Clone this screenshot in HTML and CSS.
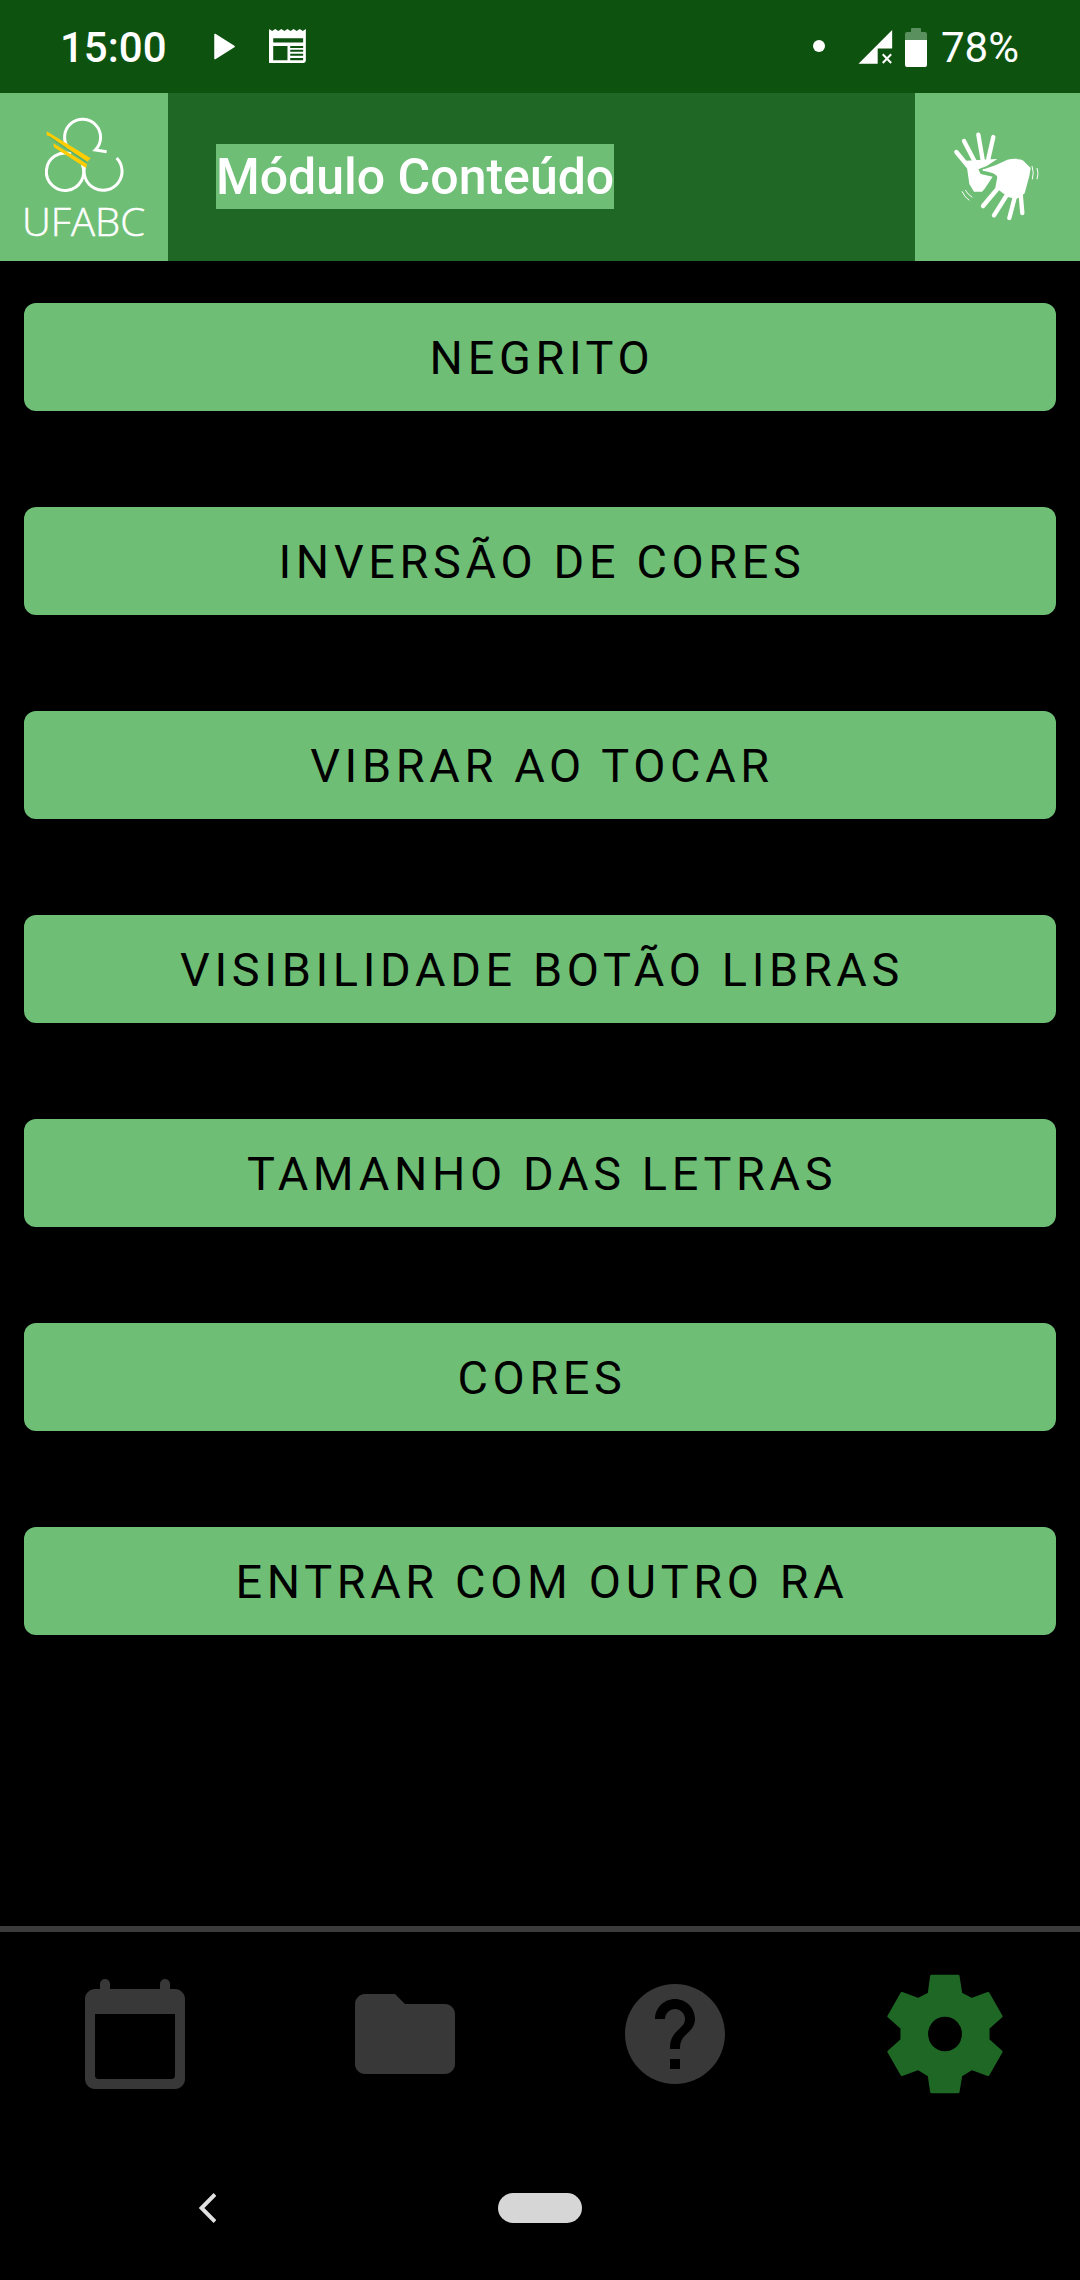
FILE: index.html
```html
<!DOCTYPE html>
<html lang="pt-BR">
<head>
    <meta charset="UTF-8">
    <title>Módulo Conteúdo</title>
    <link rel="stylesheet" href="styles.css">
</head>
<body>

    <div class="status-bar">
        <span class="status-time">15:00</span>
        <svg class="icon-play" viewBox="0 0 21 27"><path d="M1 1.5 20 13.5 1 25.5z" fill="#fff" stroke="#fff" stroke-width="1.5" stroke-linejoin="round"/></svg>
        <svg class="icon-news" viewBox="778 90 111 100">
            <path d="M778 90l9 6 9-6 9 6 9-6 9 6 9-6 9 6 9-6 9 6 9-6 9 6 9-6v93q0 7-7 7h-97q-7 0-7-7z" fill="#fff"/>
            <path d="M790 117h88v13h-88zM790 140h42v42h-42zM840 140h38v6h-38zM840 151h38v6h-38zM840 163h38v6h-38zM840 175h38v7h-38z" fill="#0e5210"/>
        </svg>
        <div class="status-right">
            <span class="status-dot"></span>
            <svg class="icon-signal" viewBox="925 90 101 101">
                <path d="M925 190 1025 90v55h-43v45z" fill="#fff"/>
                <path d="M997 162 1022 188M1022 162 997 188" stroke="#fff" stroke-width="6"/>
            </svg>
            <div class="battery">
                <span class="battery-cap"></span>
                <span class="battery-empty"></span>
                <span class="battery-level"></span>
            </div>
            <span class="status-percent">78%</span>
        </div>
    </div>

    <header class="app-header">
        <div class="logo-box">
            <svg class="logo" viewBox="0 9 504 504">
                <g fill="none" stroke="#fff" stroke-width="9">
                    <path d="M206 176A54 54 0 1 1 286 180L320 185"/>
                    <path d="M213 192A56 56 0 1 0 247 224"/>
                    <path d="M350 204A57 57 0 1 1 255 226"/>
                </g>
                <path d="M140 124 272 205 262 215 140 135z" fill="#ffcc00"/>
                <path d="M146 137 262 216 259 218 146 140z" fill="#4fae6a"/>
                <path d="M160 160 261 222 258 234 162 172z" fill="#ffcc00"/>
                <text class="logo-text" x="66" y="438" textLength="369" lengthAdjust="spacingAndGlyphs">UFABC</text>
            </svg>
        </div>
        <div class="header-title">
            <span class="title-text">Módulo Conteúdo</span>
        </div>
        <div class="libras-box">
            <svg class="libras" viewBox="15 9 495 504">
                <g stroke="#fff" stroke-width="13" stroke-linecap="round" fill="none">
                    <path d="M139 186 182 238"/>
                    <path d="M162 153 198 222"/>
                    <path d="M205 134 219 215"/>
                    <path d="M250 141 233 215"/>
                    <path d="M219 348 272 285"/>
                    <path d="M252 376 300 300"/>
                    <path d="M298 384 320 300"/>
                    <path d="M337 369 330 290"/>
                </g>
                <path d="M168 212 245 208 262 207 230 228 205 238 212 252 248 260 224 296 216 305 192 305 178 282z" fill="#fff"/>
                <path d="M218 238C240 232 262 224 292 209 312 205 332 206 340 212L362 234 358 258 344 310 330 322 318 326 296 322 274 306 256 292 262 262C260 250 240 246 218 242z" fill="#fff"/>
                <g fill="none" stroke="#fff" stroke-width="3">
                    <path d="M366 228Q373 248 367 268"/>
                    <path d="M381 234Q387 250 381 268"/>
                    <path d="M156 304Q164 322 178 331"/>
                    <path d="M166 300Q172 312 187 322"/>
                </g>
            </svg>
        </div>
    </header>

    <main class="menu">
        <button class="menu-btn" type="button">NEGRITO</button>
        <button class="menu-btn" type="button">INVERSÃO DE CORES</button>
        <button class="menu-btn" type="button">VIBRAR AO TOCAR</button>
        <button class="menu-btn" type="button">VISIBILIDADE BOTÃO LIBRAS</button>
        <button class="menu-btn" type="button">TAMANHO DAS LETRAS</button>
        <button class="menu-btn" type="button">CORES</button>
        <button class="menu-btn" type="button">ENTRAR COM OUTRO RA</button>
    </main>

    <nav class="tab-bar">
        <svg class="tab-icon" viewBox="0 0 24 24"><path d="M20 3h-1V2a1 1 0 0 0-2 0v1H7V2a1 1 0 0 0-2 0v1H4c-1.1 0-2 .9-2 2v16c0 1.1.9 2 2 2h16c1.1 0 2-.9 2-2V5c0-1.1-.9-2-2-2zm0 17.4c0 .3-.3.6-.6.6H4.6c-.3 0-.6-.3-.6-.6V8h16z"/></svg>
        <svg class="tab-icon" viewBox="0 0 24 24"><path d="M10 4H4c-1.1 0-1.99.9-1.99 2L2 18c0 1.1.9 2 2 2h16c1.1 0 2-.9 2-2V8c0-1.1-.9-2-2-2h-8l-2-2z"/></svg>
        <svg class="tab-icon" viewBox="0 0 24 24"><path d="M12 2C6.48 2 2 6.48 2 12s4.48 10 10 10 10-4.48 10-10S17.52 2 12 2zm1 17h-2v-2h2v2zm2.07-7.75l-.9.92C13.45 12.9 13 13.5 13 15h-2v-.5c0-1.1.45-2.1 1.17-2.83l1.24-1.26c.37-.36.59-.86.59-1.41 0-1.1-.9-2-2-2s-2 .9-2 2H8c0-2.21 1.79-4 4-4s4 1.79 4 4c0 .88-.36 1.68-.93 2.25z"/></svg>
        <svg class="tab-gear" viewBox="1008 222 336 360" preserveAspectRatio="none">
            <path d="M1137 228h77l8 53 32 17 47-18 38 69-38 35v36l38 35-38 69-47-18-32 20-8 50h-77l-7-50-32-20-47 18-38-69 38-35v-36l-38-35 38-69 47 18 32-17z" fill="#1f6724" stroke="#1f6724" stroke-width="8" stroke-linejoin="round"/>
            <ellipse cx="1176" cy="402" rx="49" ry="52" fill="#000"/>
        </svg>
    </nav>

    <div class="nav-bar">
        <svg class="nav-back" viewBox="0 0 17 30"><path d="M16 1.5 2.5 15 16 28.5" fill="none" stroke="#e0e0e0" stroke-width="4"/></svg>
        <span class="nav-pill"></span>
    </div>

</body>
</html>
```

FILE: styles.css
```css
html, body {
    margin: 0;
    padding: 0;
}
body {
    width: 1080px;
    height: 2280px;
    display: flex;
    flex-direction: column;
    background-color: #000;
    font-family: Roboto, sans-serif;
    overflow: hidden;
}

/* status bar */
.status-bar {
    height: 93px;
    flex-shrink: 0;
    display: flex;
    align-items: center;
    padding: 2px 61px 0 60px;
    box-sizing: border-box;
    background-color: #0e5210;
    color: #fff;
    font-size: 42px;
}
.status-time {
    margin-right: 47px;
    line-height: 1;
    font-weight: 500;
}
.icon-play {
    width: 21px;
    height: 27px;
    margin-right: 34px;
    margin-bottom: 3px;
}
.icon-news {
    width: 38px;
    height: 34px;
    margin-bottom: 3px;
}
.status-right {
    margin-left: auto;
    display: flex;
    align-items: center;
}
.status-dot {
    width: 12px;
    height: 12px;
    border-radius: 50%;
    background-color: #fff;
    margin-right: 33px;
    margin-bottom: 4px;
}
.icon-signal {
    width: 35px;
    height: 34px;
    margin-right: 12px;
    margin-bottom: 1px;
}
.battery {
    width: 22px;
    height: 39px;
    margin-right: 14px;
    margin-bottom: 1px;
    display: flex;
    flex-direction: column;
    align-items: center;
}
.battery-cap {
    width: 10px;
    height: 4px;
    background-color: #5a8f5e;
    border-radius: 1px 1px 0 0;
}
.battery-empty {
    width: 22px;
    height: 8px;
    background-color: #5a8f5e;
    border-radius: 2px 2px 0 0;
}
.battery-level {
    width: 22px;
    flex: 1;
    background-color: #fff;
    border-radius: 0 0 2px 2px;
}
.status-percent {
    line-height: 1;
}

/* header */
.app-header {
    height: 168px;
    flex-shrink: 0;
    display: flex;
    background-color: #1f6724;
}
.logo-box {
    width: 168px;
    background-color: #6fbe76;
}
.logo {
    display: block;
    width: 168px;
    height: 168px;
}
.logo-text {
    font-family: "Open Sans", sans-serif;
    font-weight: 300;
    font-size: 116px;
    fill: #fff;
    stroke: #fff;
    stroke-width: 1.5px;
}
.header-title {
    flex: 1;
    display: flex;
    align-items: center;
    padding-left: 48px;
}
.title-text {
    font-size: 50px;
    line-height: 63px;
    padding-top: 2px;
    margin-bottom: 2px;
    font-weight: 500;
    color: #fff;
    background-color: #6fbe76;
}
.libras-box {
    width: 165px;
    background-color: #6fbe76;
}
.libras {
    display: block;
    width: 165px;
    height: 168px;
}

/* buttons */
.menu {
    flex: 1;
    display: flex;
    flex-direction: column;
    gap: 96px;
    padding: 42px 24px 0;
}
.menu-btn {
    height: 108px;
    border: none;
    border-radius: 12px;
    padding: 2px 0 0 4px;
    background-color: #6fbe76;
    color: #000;
    font-family: Roboto, sans-serif;
    font-size: 46.75px;
    letter-spacing: 0.1em;
}

/* bottom tabs */
.tab-bar {
    height: 204px;
    flex-shrink: 0;
    border-top: 6px solid #3c3c3c;
    display: grid;
    grid-template-columns: repeat(4, 270px);
    justify-items: center;
    align-items: center;
}
.tab-icon {
    width: 120px;
    height: 120px;
    fill: #383838;
}
.tab-gear {
    width: 116px;
    height: 120px;
}

/* android nav */
.nav-bar {
    height: 144px;
    flex-shrink: 0;
    display: flex;
    align-items: center;
    padding-left: 199px;
}
.nav-back {
    width: 17px;
    height: 30px;
    margin-right: 282px;
}
.nav-pill {
    width: 84px;
    height: 30px;
    border-radius: 15px;
    background-color: #d6d6d6;
}
```
